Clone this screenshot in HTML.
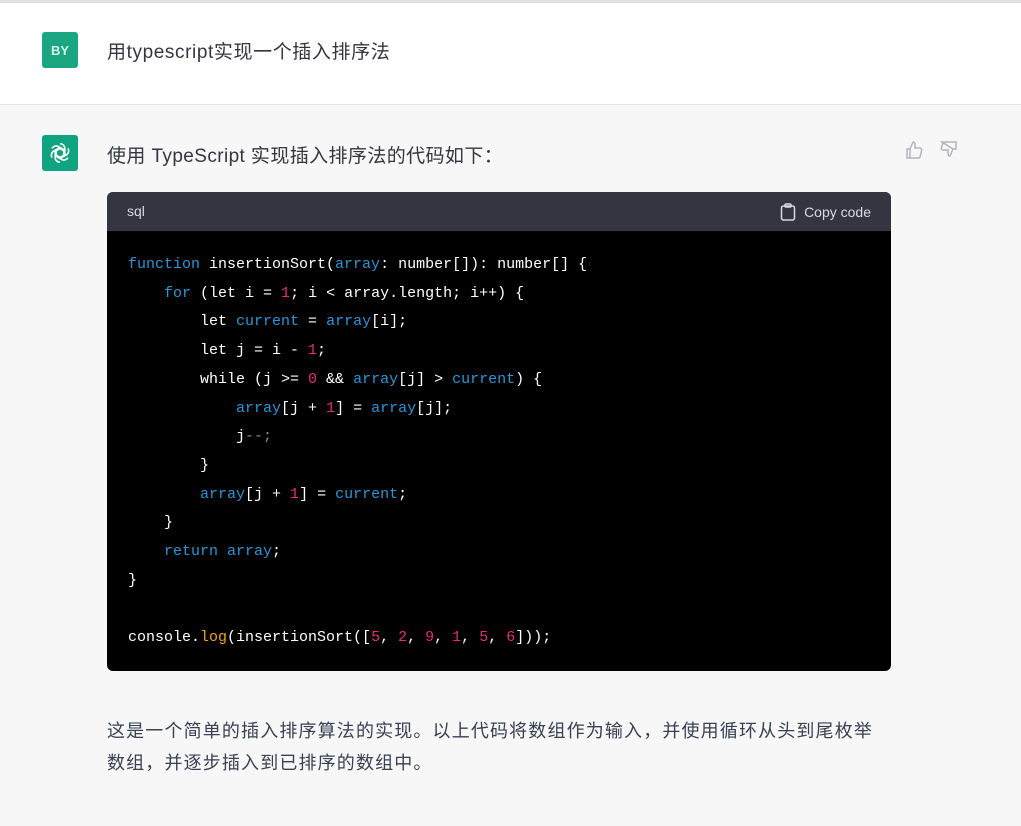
<!DOCTYPE html>
<html><head><meta charset="utf-8"><style>
body{margin:0;width:1021px;height:826px;overflow:hidden;background:#f7f7f8;font-family:"Liberation Sans","Noto Sans CJK SC",sans-serif;color:#374151}
.top{position:absolute;top:0;left:0;width:1021px;height:3px;background:#e0e0e0}
.user{position:absolute;top:3px;left:0;width:1021px;height:101px;background:#fff;border-bottom:1px solid #e5e5e5}
.av{position:absolute;left:42px;width:36px;height:36px;border-radius:3px;background:#19a680;color:#d9f3ea;font-size:13px;font-weight:bold;display:flex;align-items:center;justify-content:center}
.t{position:absolute;left:107px;font-size:19px;letter-spacing:0.6px;color:#343541}
.code{position:absolute;left:107px;top:192px;width:784px;height:479px;background:#000;border-radius:6px;overflow:hidden}
.hd{height:39px;background:#343541;color:#d9d9e3;font-size:14px;position:relative}
.hd .l{position:absolute;left:20px;top:11px}
.hd .r{position:absolute;right:20px;top:11px;display:flex;align-items:center;gap:8px}
pre{margin:0;padding:20px 0 0 21px;font-family:"Liberation Mono",monospace;font-size:15px;line-height:28.7px;color:#fff}
.k{color:#2e95d3}.n{color:#df3079}.o{color:#f0a020}.g{color:#888}
.p{position:absolute;left:107px;top:715px;font-size:18px;letter-spacing:1.15px;line-height:32px;color:#374151;width:780px}
</style></head><body>
<div class="top"></div>
<div class="user">
<div class="av" style="top:29px">BY</div>
<div class="t" style="top:34px">用typescript实现一个插入排序法</div>
</div>
<div class="av" style="top:135px;background:#10a37f"><svg width="26" height="26" viewBox="0 0 24 24" fill="none" stroke="#fff" stroke-width="1.4"><g id="a"><path d="M12 3.5c2.5 0 4.5 2 4.5 4.5v5.5L12 16"/></g><use href="#a" transform="rotate(60 12 12)"/><use href="#a" transform="rotate(120 12 12)"/><use href="#a" transform="rotate(180 12 12)"/><use href="#a" transform="rotate(240 12 12)"/><use href="#a" transform="rotate(300 12 12)"/></svg></div>
<div class="t" style="top:141px;letter-spacing:0.4px">使用 TypeScript 实现插入排序法的代码如下：</div>
<svg style="position:absolute;left:905px;top:140px" width="18" height="20" viewBox="0 0 18 20" fill="none" stroke="#b4b4bd" stroke-width="1.5"><path d="M2 9h3v9H2zM5 9l3-7c2 0 2 2 2 3v3h5c1 0 2 1 1.6 2.5L15 17c-.3 1-1 1-2 1H5"/></svg>
<svg style="position:absolute;left:940px;top:140px" width="18" height="20" viewBox="0 0 18 20" fill="none" stroke="#b4b4bd" stroke-width="1.5"><path d="M2 2h14v7h-3zM13 9l-3 7c-2 0-2-2-2-3v-3H3c-1 0-2-1-1.6-2.5L3 3"/></svg>
<div class="code">
<div class="hd"><span class="l">sql</span><span class="r"><svg width="16" height="18" viewBox="0 0 16 18" fill="none" stroke="#d9d9e3" stroke-width="1.5"><rect x="1.5" y="3" width="13" height="14" rx="2"/><rect x="5" y="1" width="6" height="3" rx="1"/></svg>Copy code</span></div>
<pre><span class="k">function</span> insertionSort(<span class="k">array</span>: number[]): number[] {
    <span class="k">for</span> (let i = <span class="n">1</span>; i &lt; array.length; i++) {
        let <span class="k">current</span> = <span class="k">array</span>[i];
        let j = i - <span class="n">1</span>;
        while (j &gt;= <span class="n">0</span> &amp;&amp; <span class="k">array</span>[j] &gt; <span class="k">current</span>) {
            <span class="k">array</span>[j + <span class="n">1</span>] = <span class="k">array</span>[j];
            j<span class="g">--;</span>
        }
        <span class="k">array</span>[j + <span class="n">1</span>] = <span class="k">current</span>;
    }
    <span class="k">return array</span>;
}

console.<span class="o">log</span>(insertionSort([<span class="n">5</span>, <span class="n">2</span>, <span class="n">9</span>, <span class="n">1</span>, <span class="n">5</span>, <span class="n">6</span>]));</pre>
</div>
<div class="p">这是一个简单的插入排序算法的实现。以上代码将数组作为输入，并使用循环从头到尾枚举数组，并逐步插入到已排序的数组中。</div>
</body></html>
